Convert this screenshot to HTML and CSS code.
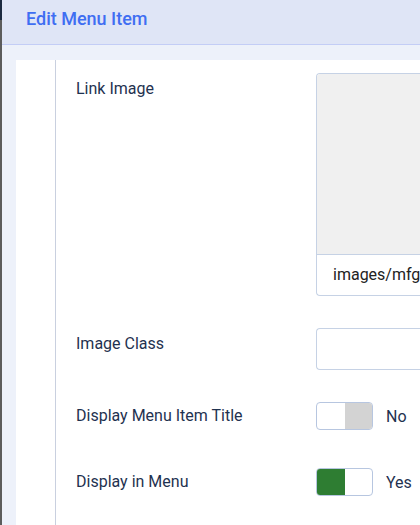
FILE: index.html
```html
<!DOCTYPE html>
<html lang="en">
<head>
  <meta charset="UTF-8" />
  <meta name="viewport" content="width=device-width, initial-scale=1.0"/>
  <title>Edit Menu Item</title>
  <link rel="stylesheet" href="styles.css">
</head>
<body>
  <div class="edge"></div>

  <div class="page">
    <header class="title-bar">
      <h1>Edit Menu Item</h1>
    </header>

    <main class="content">
      <div class="card">
        <div class="gutter"></div>
        <div class="fields">

          <div class="row">
            <label>Link Image</label>
            <div class="control">
              <div class="media">
                <div class="preview"></div>
                <div class="media-path">images/mfg</div>
              </div>
            </div>
          </div>

          <div class="row">
            <label>Image Class</label>
            <div class="control">
              <div class="text-input"></div>
            </div>
          </div>

          <div class="row row-switch">
            <label>Display Menu Item Title</label>
            <div class="control switch-line">
              <span class="switch off"><span></span><span></span></span>
              <span class="switch-text">No</span>
            </div>
          </div>

          <div class="row row-switch">
            <label>Display in Menu</label>
            <div class="control switch-line">
              <span class="switch on"><span></span><span></span></span>
              <span class="switch-text">Yes</span>
            </div>
          </div>

        </div>
      </div>
    </main>
  </div>
</body>
</html>
```

FILE: styles.css
```css
html, body {
  margin: 0;
  padding: 0;
  height: 100%;
  overflow: hidden;
}

body {
  font-family: Roboto, "Liberation Sans", sans-serif;
  background: #edf1fa;
  color: #1f3250;
  display: flex;
}

.edge {
  width: 2px;
  flex: none;
  background: linear-gradient(#1b2a40 0, #1b2a40 20px, #5c5c5c 20px);
}

.page {
  flex: 1;
  min-width: 0;
  display: flex;
  flex-direction: column;
}

.title-bar {
  height: 44px;
  background: #dfe5f6;
  border-bottom: 1px solid #c3cdf6;
  padding: 0 0 0 24px;
  display: flex;
  align-items: center;
}

.title-bar h1 {
  margin: -8px 0 0 0;
  font-size: 18px;
  font-weight: 500;
  color: #3f6ef2;
}

.content {
  flex: 1;
  padding: 15px 0 0 14px;
  display: flex;
}

.card {
  flex: 1;
  background: #fff;
  display: flex;
}

.gutter {
  width: 39px;
  flex: none;
  border-right: 1px solid #c9d0df;
}

.fields {
  flex: 1;
  padding: 13px 0 0 20px;
}

.row {
  display: flex;
  align-items: flex-start;
  margin-top: 32px;
}

.row:first-child {
  margin-top: 0;
}

.row label {
  width: 240px;
  flex: none;
  font-size: 16px;
  line-height: 20px;
  padding-top: 6px;
}

.control {
  flex: 1;
}

.media {
  border: 1px solid #c6d2e5;
  border-right: none;
  border-radius: 4px 0 0 4px;
  overflow: hidden;
}

.preview {
  height: 180px;
  background: #f0f0f0;
}

.media-path {
  border-top: 1px solid #c6d2e5;
  height: 40px;
  line-height: 40px;
  padding-left: 16px;
  font-size: 16px;
  color: #222;
}

.text-input {
  height: 40px;
  border: 1px solid #c6d2e5;
  border-right: none;
  border-radius: 4px 0 0 4px;
}

.row-switch {
  align-items: center;
}

.row-switch label {
  padding-top: 0;
}

.row-switch:last-child {
  margin-top: 38px;
}

.switch-line {
  display: flex;
  align-items: center;
}

.switch {
  display: flex;
  width: 55px;
  height: 26px;
  border: 1px solid #b7c6e0;
  border-radius: 4px;
  overflow: hidden;
}

.switch span {
  flex: 1;
}

.switch.off span:last-child {
  background: #d3d3d3;
}

.switch.on span:first-child {
  background: #2e7d32;
}

.switch-text {
  margin-left: 13px;
  font-size: 16px;
  color: #1f3250;
}
```
